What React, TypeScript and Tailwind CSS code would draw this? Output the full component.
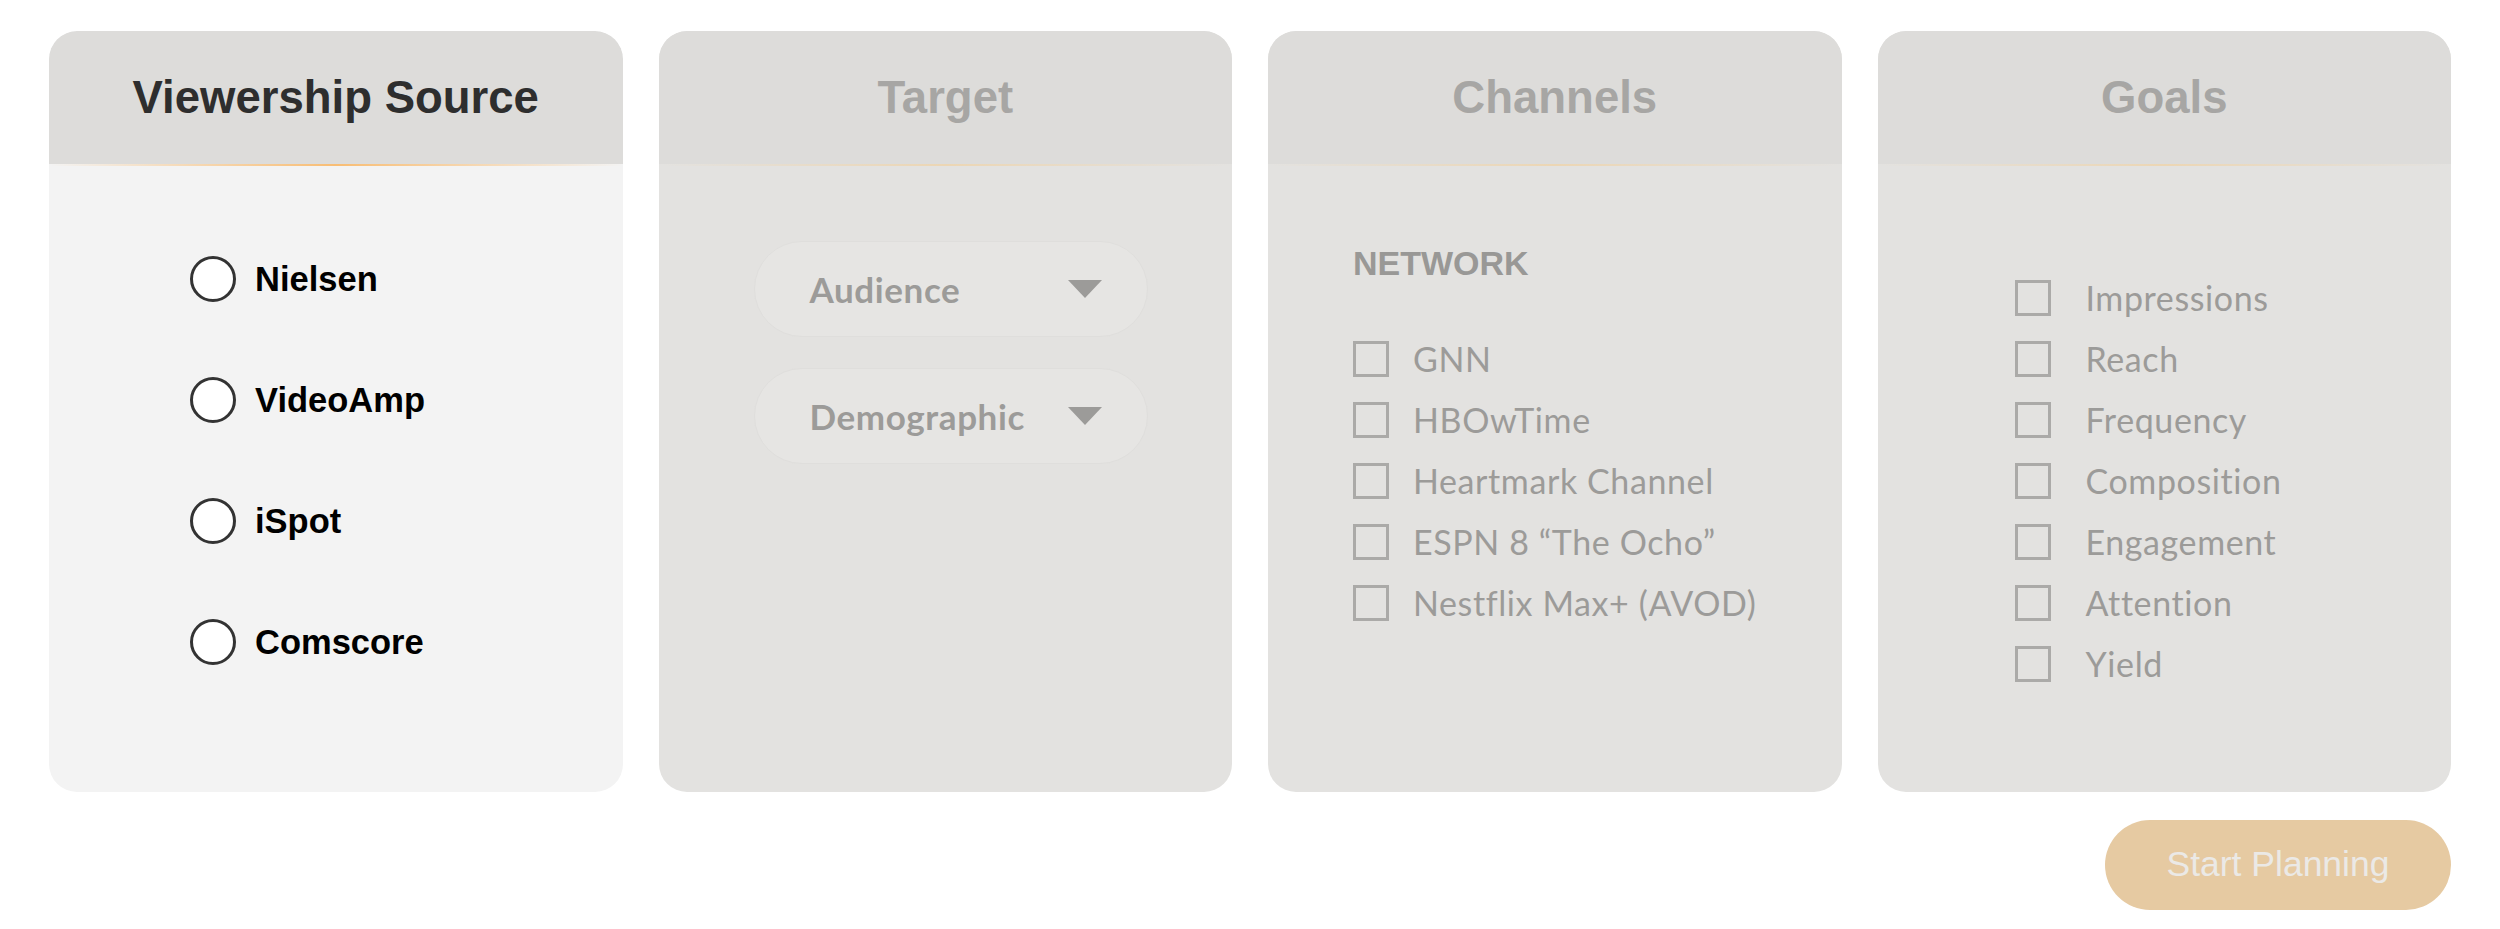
import { useState } from "react";

const sources = ["Nielsen", "VideoAmp", "iSpot", "Comscore"];
const networks = ["GNN", "HBOwTime", "Heartmark Channel", "ESPN 8 \u201CThe Ocho\u201D", "Nestflix Max+ (AVOD)"];
const goals = ["Impressions", "Reach", "Frequency", "Composition", "Engagement", "Attention", "Yield"];

function CardHeader({ title, active }: { title: string; active?: boolean }) {
  return (
    <div className="relative">
      <div className="h-[133px] flex items-center justify-center bg-[#dddcda] rounded-t-[28px]">
        <h2
          className={
            "font-['Liberation_Sans',Arial,sans-serif] font-bold text-[45.5px] leading-none " +
            (active ? "text-[#2e2e2e]" : "text-[#a7a6a4]")
          }
        >
          {title}
        </h2>
      </div>
      <div
        className={
          "h-[2px] bg-linear-to-r from-transparent to-transparent " +
          (active ? "via-[#f8bd74]" : "via-[#ecd6b4]")
        }
      />
    </div>
  );
}

function Checkbox({ label }: { label: string }) {
  return (
    <label className="flex items-center h-9">
      <span className="w-9 h-9 shrink-0 border-[3px] border-[#abaaa8]" />
      <span className="font-['Lato',sans-serif] text-[34px] leading-none text-[#9c9b99] tracking-[0.6px] whitespace-nowrap">
        {label}
      </span>
    </label>
  );
}

export default function App() {
  const [source, setSource] = useState<string | null>(null);

  return (
    <div className="min-h-screen bg-white px-[49px] pt-[31px]">
      <div className="grid grid-cols-4 gap-[36px]">
        {/* Viewership Source */}
        <section className="h-[761px] rounded-[28px] bg-[#f3f3f3] overflow-hidden">
          <CardHeader title="Viewership Source" active />
          <div className="pl-[141px] pt-[90px] flex flex-col gap-[75px]">
            {sources.map((s) => (
              <button key={s} onClick={() => setSource(s)} className="flex items-center gap-[19px] h-[46px]">
                <span className="w-[46px] h-[46px] rounded-full border-[3px] border-[#333] bg-white flex items-center justify-center">
                  {source === s && <span className="w-6 h-6 rounded-full bg-[#333]" />}
                </span>
                <span className="font-['Liberation_Sans',Arial,sans-serif] font-bold text-[34.5px] leading-none text-black">
                  {s}
                </span>
              </button>
            ))}
          </div>
        </section>

        {/* Target */}
        <section className="h-[761px] rounded-[28px] bg-[#e3e2e0] overflow-hidden">
          <CardHeader title="Target" />
          <div className="pl-[95px] pt-[75px] flex flex-col gap-[31px]">
            {["Audience", "Demographic"].map((t) => (
              <div
                key={t}
                className="w-[394px] h-[96px] rounded-full bg-[#e6e5e3] border border-[#dfdedc] flex items-center justify-between pl-[55px] pr-[45px]"
              >
                <span className="font-['Lato',sans-serif] font-bold text-[35px] tracking-[0.6px] leading-none text-[#9c9b99]">
                  {t}
                </span>
                <svg width="34" height="18" viewBox="0 0 34 18">
                  <path d="M0 0 L34 0 L17 18 Z" fill="#9c9b99" />
                </svg>
              </div>
            ))}
          </div>
        </section>

        {/* Channels */}
        <section className="h-[761px] rounded-[28px] bg-[#e3e2e0] overflow-hidden">
          <CardHeader title="Channels" />
          <div className="pl-[85px] pt-[80px]">
            <h3 className="font-['Liberation_Sans',Arial,sans-serif] font-bold text-[34px] leading-none text-[#999896]">
              NETWORK
            </h3>
            <div className="mt-[61px] flex flex-col gap-[25px] [&_label>span:last-child]:ml-[24px]">
              {networks.map((n) => (
                <Checkbox key={n} label={n} />
              ))}
            </div>
          </div>
        </section>

        {/* Goals */}
        <section className="h-[761px] rounded-[28px] bg-[#e3e2e0] overflow-hidden">
          <CardHeader title="Goals" />
          <div className="pl-[137px] pt-[114px] flex flex-col gap-[25px] [&_label>span:last-child]:ml-[35px]">
            {goals.map((g) => (
              <Checkbox key={g} label={g} />
            ))}
          </div>
        </section>
      </div>

      <div className="flex justify-end mt-[28px]">
        <button className="w-[346px] h-[90px] rounded-full bg-[#e6caa2] font-['Liberation_Sans',Arial,sans-serif] text-[35.5px] text-[#ebe9e6]">
          Start Planning
        </button>
      </div>
    </div>
  );
}
